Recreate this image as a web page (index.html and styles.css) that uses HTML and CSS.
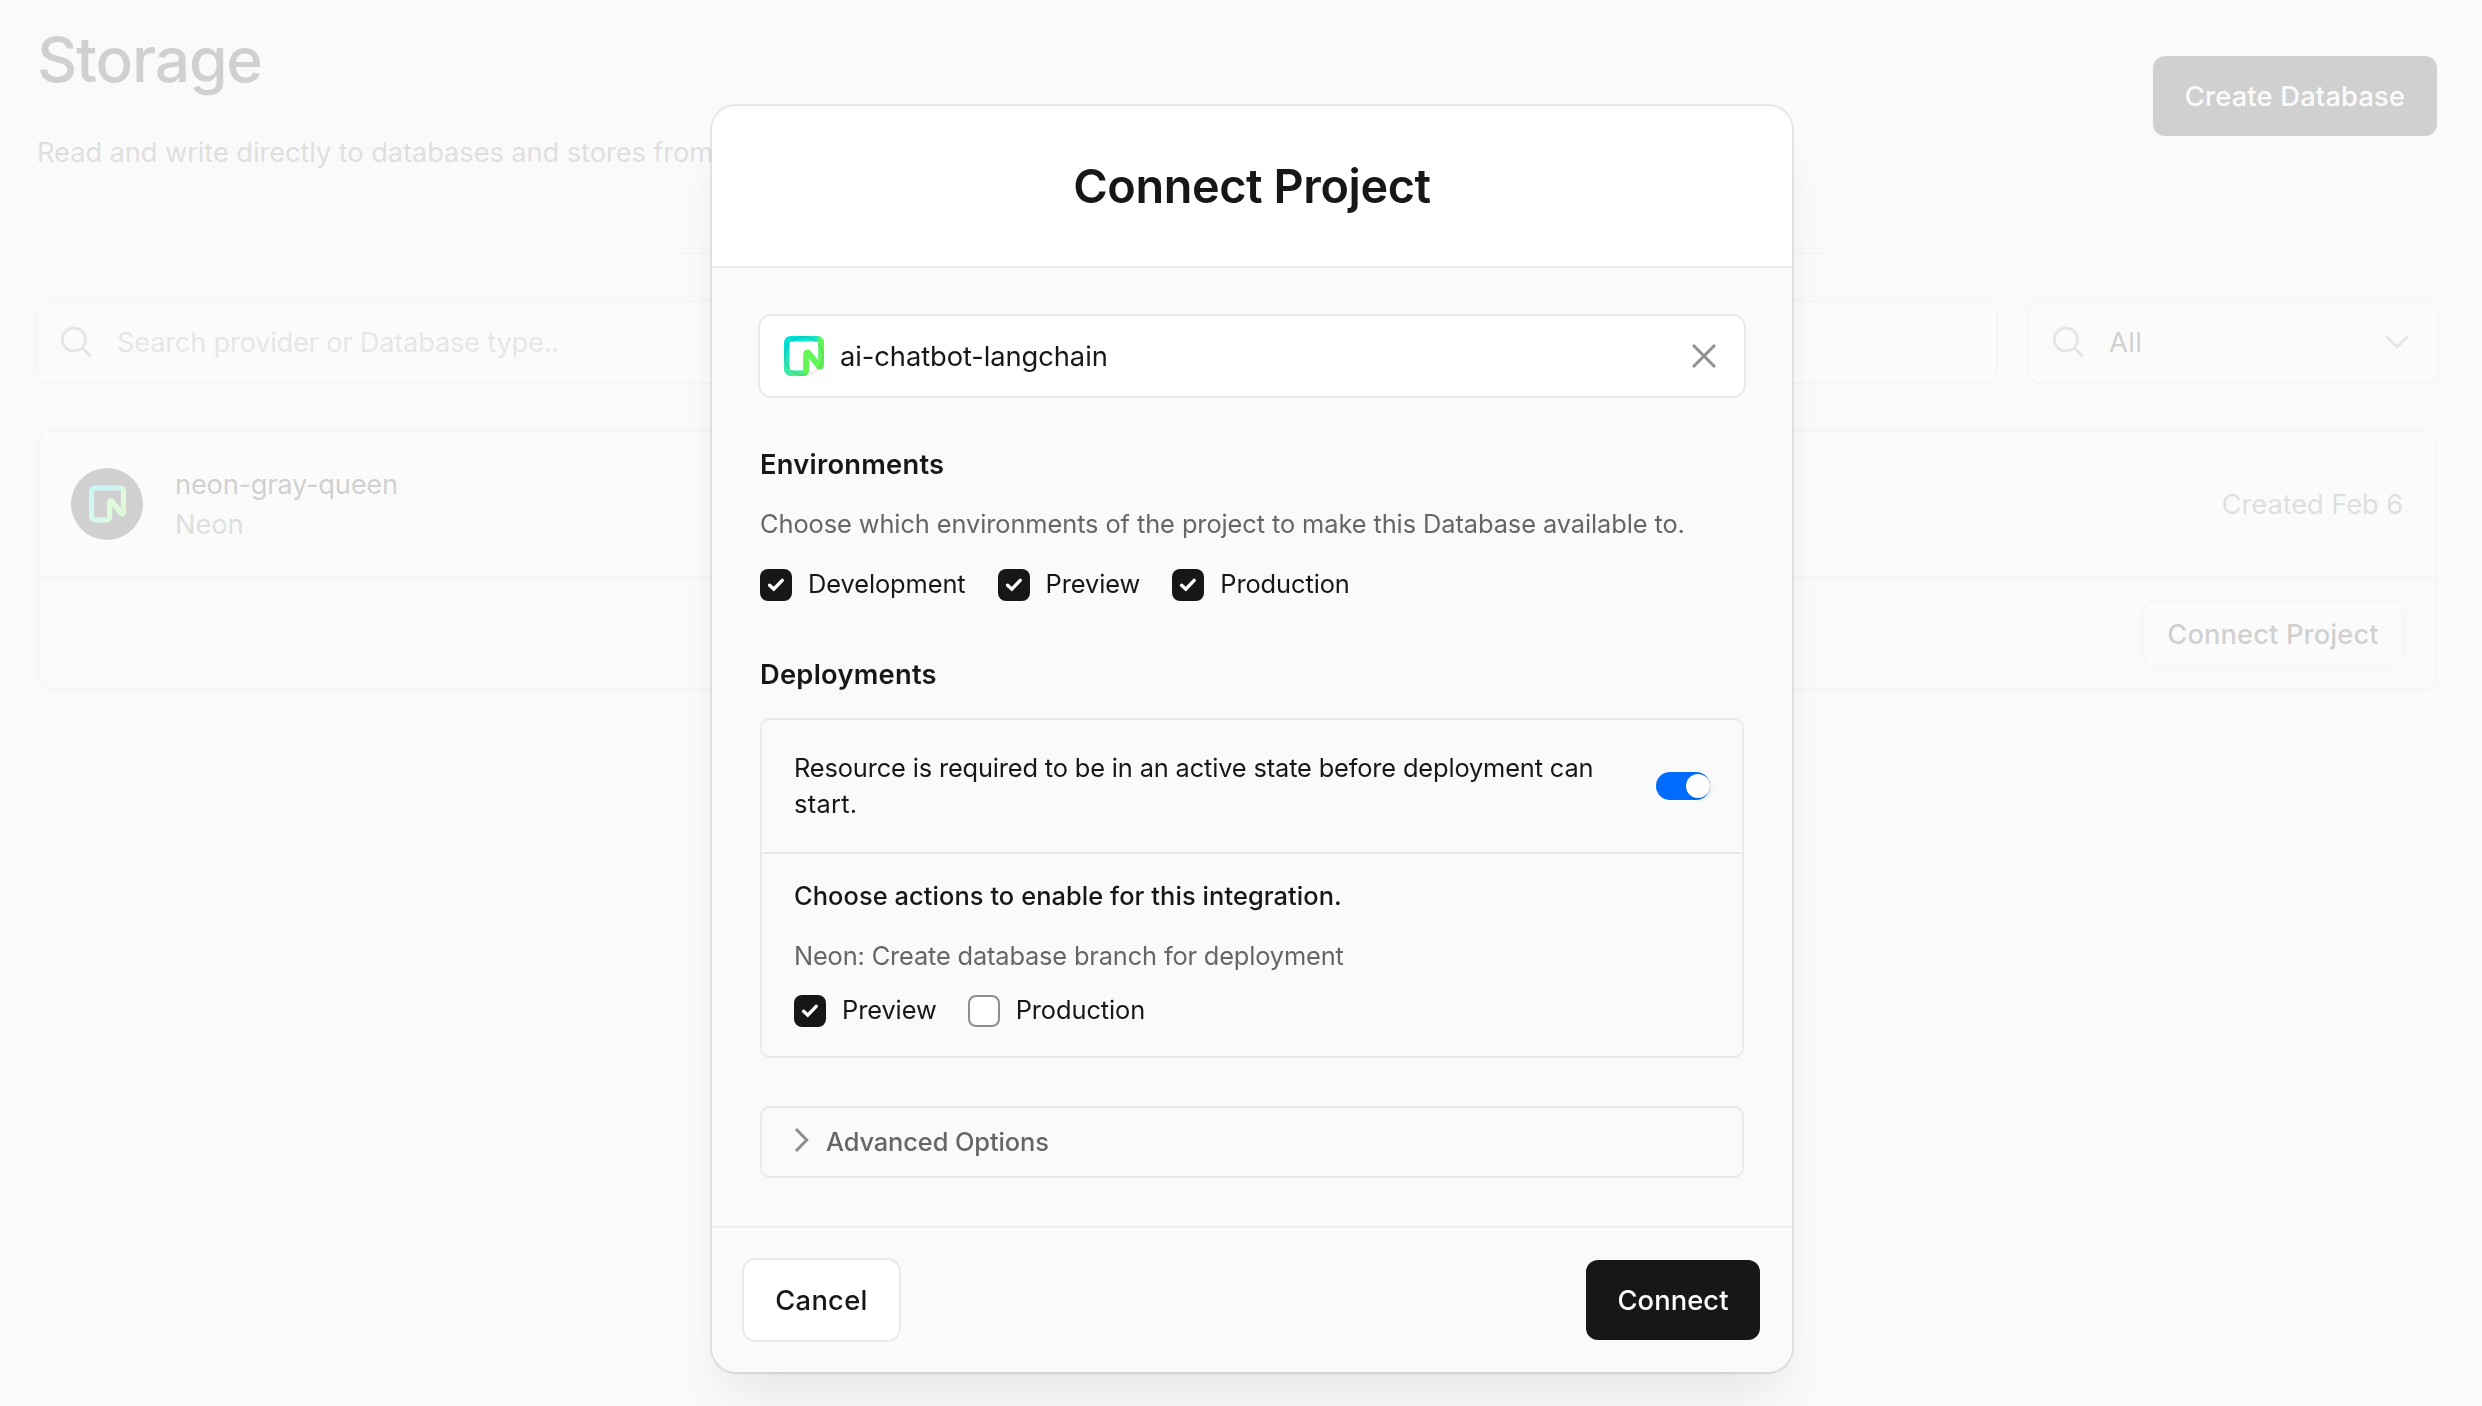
FILE: index.html
```html
<!DOCTYPE html>
<html lang="en">
<head>
<meta charset="utf-8">
<title>Storage</title>
<link rel="stylesheet" href="styles.css">
</head>
<body>
<svg class="defs" aria-hidden="true">
  <defs>
    <linearGradient id="neon-fade" x1="64" y1="64" x2="24" y2="0" gradientUnits="userSpaceOnUse">
      <stop offset="0" stop-color="#62f755"/>
      <stop offset="1" stop-color="#8ff986" stop-opacity="0"/>
    </linearGradient>
    <symbol id="neon" viewBox="0 0 64 64">
      <path fill="#00e0d9" fill-rule="evenodd" d="M0 11.015C0 4.932 4.942 0 11.038 0h41.925C59.059 0 64 4.932 64 11.015v35.599c0 6.293-7.98 9.024-11.85 4.055L40.054 35.138v18.948C40.054 59.56 35.607 64 30.121 64H11.038C4.942 64 0 59.069 0 52.985V11.015Zm11.038-2.203a2.205 2.205 0 0 0-2.208 2.203v41.97c0 1.217.989 2.204 2.208 2.204h19.419c.61 0 .78-.493.78-1.101V28.761c0-6.293 7.98-9.025 11.85-4.055l12.097 15.53V11.015c0-1.218.115-2.203-1.104-2.203H11.038Z"/>
      <path fill="url(#neon-fade)" fill-rule="evenodd" d="M0 11.015C0 4.932 4.942 0 11.038 0h41.925C59.059 0 64 4.932 64 11.015v35.599c0 6.293-7.98 9.024-11.85 4.055L40.054 35.138v18.948C40.054 59.56 35.607 64 30.121 64H11.038C4.942 64 0 59.069 0 52.985V11.015Zm11.038-2.203a2.205 2.205 0 0 0-2.208 2.203v41.97c0 1.217.989 2.204 2.208 2.204h19.419c.61 0 .78-.493.78-1.101V28.761c0-6.293 7.98-9.025 11.85-4.055l12.097 15.53V11.015c0-1.218.115-2.203-1.104-2.203H11.038Z"/>
      <path fill="#63f655" d="M52.963 0C59.059 0 64 4.932 64 11.015v35.599c0 6.293-7.98 9.024-11.85 4.055L40.054 35.138v18.948C40.054 59.56 35.607 64 30.121 64a1.1 1.1 0 0 0 1.104-1.101V28.761c0-6.293 7.98-9.025 11.85-4.055l12.097 15.53V2.203C55.172.986 54.183 0 52.963 0Z"/>
    </symbol>
    <symbol id="search" viewBox="0 0 32 32">
      <circle cx="14" cy="13.5" r="11.6" fill="none" stroke="currentColor" stroke-width="3"/>
      <path d="M22.3 22 31 30.7" fill="none" stroke="currentColor" stroke-width="3"/>
    </symbol>
    <symbol id="check" viewBox="0 0 32 32">
      <path d="M9.6 16.2 13.8 20.2 22.2 11.3" fill="none" stroke="currentColor" stroke-width="3.4" stroke-linecap="round"/>
    </symbol>
  </defs>
</svg>

<main class="page">
  <header class="page-header">
    <div>
      <h1 class="page-title">Storage</h1>
      <p class="page-lead">Read and write directly to databases and stores from</p>
    </div>
    <button class="btn btn-primary create">Create Database</button>
  </header>
  <div class="toolbar">
    <div class="field search-field">
      <svg class="icon-search"><use href="#search"/></svg>
      <span class="placeholder">Search provider or Database type..</span>
    </div>
    <div class="field select-field">
      <svg class="icon-search"><use href="#search"/></svg>
      <span class="select-value">All</span>
      <svg class="icon-down" viewBox="0 0 26 16"><path d="M2 2 13 13 24 2" fill="none" stroke="currentColor" stroke-width="3"/></svg>
    </div>
  </div>
  <section class="store">
    <div class="store-info">
      <span class="avatar"><svg><use href="#neon"/></svg></span>
      <div class="store-text">
        <div class="store-name">neon-gray-queen</div>
        <div class="store-provider">Neon</div>
      </div>
      <div class="store-date">Created Feb 6</div>
    </div>
    <div class="store-actions"><button class="btn connect-project">Connect Project</button></div>
  </section>
</main>

<div class="backdrop">
  <div class="modal" role="dialog" aria-modal="true">
    <header class="modal-header"><h2>Connect Project</h2></header>
    <div class="modal-body">
      <div class="project-field">
        <span class="project-logo"><svg><use href="#neon"/></svg></span>
        <span class="project-name">ai-chatbot-langchain</span>
        <svg class="icon-close" viewBox="0 0 24 24"><path d="M1 1 23 23M23 1 1 23" fill="none" stroke="currentColor" stroke-width="3"/></svg>
      </div>

      <h3 class="environments-title">Environments</h3>
      <p class="environments-hint">Choose which environments of the project to make this Database available to.</p>
      <div class="checks environments-checks">
        <label class="check"><span class="box checked"><svg><use href="#check"/></svg></span><span>Development</span></label>
        <label class="check"><span class="box checked"><svg><use href="#check"/></svg></span><span>Preview</span></label>
        <label class="check"><span class="box checked"><svg><use href="#check"/></svg></span><span>Production</span></label>
      </div>

      <h3 class="deployments-title">Deployments</h3>
      <div class="panel">
        <div class="panel-row">
          <p class="panel-text">Resource is required to be in an active state before deployment can <span class="last-word">start.</span></p>
          <span class="toggle"><span class="knob"></span></span>
        </div>
        <div class="panel-actions">
          <p class="actions-title">Choose actions to enable for this integration.</p>
          <p class="actions-hint">Neon: Create database branch for deployment</p>
          <div class="checks actions-checks">
            <label class="check"><span class="box checked"><svg><use href="#check"/></svg></span><span>Preview</span></label>
            <label class="check"><span class="box"></span><span>Production</span></label>
          </div>
        </div>
      </div>

      <div class="advanced">
        <svg class="icon-right" viewBox="0 0 15 26"><path d="M2 2 12.7 13 2 24" fill="none" stroke="currentColor" stroke-width="3"/></svg>
        <span>Advanced Options</span>
      </div>
    </div>
    <footer class="modal-footer">
      <button class="btn cancel">Cancel</button>
      <button class="btn btn-primary connect">Connect</button>
    </footer>
  </div>
</div>
</body>
</html>
```
FILE: styles.css
```css
* { box-sizing: border-box; }

body {
  margin: 0;
  height: 1406px;
  overflow: hidden;
  background: #fafafa;
  color: #171717;
  font-family: Inter, "Liberation Sans", sans-serif;
  font-size: 27.3px;
  line-height: 40px;
}

h1, h2, h3, p { margin: 0; }
svg { display: block; flex: none; }
.defs { position: absolute; width: 0; height: 0; }

/* Buttons */
.btn {
  border: 0;
  padding: 2px 0 0;
  border-radius: 12px;
  background: #fff;
  box-shadow: 0 0 0 2px #eaeaea;
  color: #171717;
  font: 500 27.3px/40px Inter, "Liberation Sans", sans-serif;
}
.btn-primary { background: #171717; color: #fff; box-shadow: none; }

/* Page behind the dialog */
.page-header {
  display: flex;
  justify-content: space-between;
  align-items: flex-start;
  height: 254px;
  padding: 24px 45px 0 38px;
  border-bottom: 2px solid #e2e2e2;
}
.page-title {
  margin-left: -1px;
  font-size: 62.4px;
  line-height: 72px;
  font-weight: 500;
  letter-spacing: -1.2px;
}
.page-lead { margin: 37px 0 0 -1px; color: #666; letter-spacing: -0.1px; }
.create { width: 284px; height: 80px; margin-top: 32px; letter-spacing: 0.18px; }

.toolbar { display: flex; gap: 33px; padding: 48px 45px 0 38px; }
.field {
  display: flex;
  align-items: center;
  height: 80px;
  padding: 0 28px 0 22px;
  border-radius: 12px;
  background: #fff;
  box-shadow: 0 0 0 2px #e2e2e2;
}
.search-field { flex: 1; }
.select-field { width: 408px; padding: 0 27px 0 23px; }
.icon-search { width: 32px; height: 32px; margin-right: 25px; color: #8f8f8f; }
.placeholder { padding-top: 1px; color: #8f8f8f; letter-spacing: -0.25px; }
.select-value { flex: 1; padding-top: 1px; letter-spacing: 0.4px; }
.icon-down { width: 26px; height: 16px; color: #8f8f8f; }

.store {
  margin: 48px 45px 0 38px;
  border: 2px solid #e2e2e2;
  border-radius: 12px;
  overflow: hidden;
}
.store-info {
  display: flex;
  align-items: center;
  height: 144px;
  padding: 0 32px 0 31px;
  background: #fff;
}
.avatar {
  display: flex;
  align-items: center;
  justify-content: center;
  width: 72px;
  height: 72px;
  margin-right: 32px;
  border-radius: 50%;
  background: #171717;
}
.avatar svg { width: 37px; height: 38px; }
.store-text { flex: 1; padding-top: 2px; }
.store-name { letter-spacing: -0.25px; }
.store-provider { color: #666; letter-spacing: -0.1px; }
.store-date { padding-top: 2px; color: #666; letter-spacing: -0.1px; }
.store-actions {
  display: flex;
  justify-content: flex-end;
  height: 112px;
  padding: 24px 33px;
  border-top: 2px solid #e2e2e2;
}
.connect-project { width: 258px; height: 64px; box-shadow: 0 0 0 2px #e2e2e2; letter-spacing: 0.12px; }

/* Dialog */
.backdrop {
  position: fixed;
  inset: 0;
  display: flex;
  justify-content: center;
  align-items: flex-start;
  padding: 106px 0 0 22px;
  background: rgba(250, 250, 250, 0.815);
}
.modal {
  width: 1080px;
  border-radius: 24px;
  background: #fafafa;
  box-shadow:
    0 0 0 2px rgba(0, 0, 0, 0.08),
    0 2px 2px rgba(0, 0, 0, 0.02),
    0 16px 32px -8px rgba(0, 0, 0, 0.04),
    0 48px 64px -16px rgba(0, 0, 0, 0.06);
}
.modal-header {
  height: 162px;
  padding-top: 45px;
  border-bottom: 2px solid #eaeaea;
  border-radius: 24px 24px 0 0;
  background: #fff;
  text-align: center;
}
.modal-header h2 {
  font-size: 46.8px;
  line-height: 70px;
  font-weight: 600;
  letter-spacing: -0.4px;
}
.modal-body { padding: 48px; font-size: 25.4px; }

.project-field {
  display: flex;
  align-items: center;
  height: 80px;
  padding: 0 28px 0 24px;
  border-radius: 12px;
  background: #fff;
  box-shadow: 0 0 0 2px #eaeaea;
  font-size: 27.3px;
}
.project-logo { position: relative; width: 40px; height: 40px; margin-right: 16px; }
.project-logo svg { width: 40px; height: 40px; }
.project-logo::after {
  content: "";
  position: absolute;
  inset: 0;
  border: 2px solid rgba(0, 0, 0, 0.08);
  border-radius: 50%;
}
.project-name { flex: 1; padding-top: 2px; letter-spacing: -0.07px; }
.icon-close { width: 24px; height: 24px; color: #8f8f8f; }

h3 { font-size: 27.3px; font-weight: 600; letter-spacing: 0.25px; }
.environments-title { margin-top: 49px; }
.environments-hint { margin-top: 18px; line-height: 41px; color: #666; letter-spacing: -0.09px; }
.environments-checks { margin-top: 25px; }
.deployments-title { margin-top: 54px; }

.checks { display: flex; gap: 32px; line-height: 29px; letter-spacing: -0.08px; }
.actions-checks { gap: 31px; }
.check { display: flex; gap: 16px; height: 32px; }
.box {
  width: 32px;
  height: 32px;
  border: 2px solid #8f8f8f;
  border-radius: 8px;
  background: #fff;
}
.box.checked { border: 0; background: #171717; color: #fff; }
.box svg { width: 32px; height: 32px; }

.panel { margin-top: 23px; border: 2px solid #eaeaea; border-radius: 10px; }
.panel-row {
  display: flex;
  align-items: center;
  justify-content: space-between;
  height: 134px;
  padding: 0 32px;
  border-bottom: 2px solid #eaeaea;
}
.panel-text { width: 806px; line-height: 36px; letter-spacing: -0.15px; }
.last-word { letter-spacing: 0.3px; }
.toggle {
  display: flex;
  align-items: center;
  justify-content: flex-end;
  width: 54px;
  height: 28px;
  border-radius: 14px;
  background: #006bff;
}
.knob {
  width: 24px;
  height: 24px;
  border-radius: 50%;
  background: #fff;
  box-shadow: 2px 2px 4px rgba(0, 0, 0, 0.06);
}
.panel-actions { padding: 22px 32px 29px; }
.actions-title { line-height: 39px; font-weight: 500; letter-spacing: 0.086px; }
.actions-hint { margin: 21px 0 19px; color: #666; letter-spacing: -0.16px; }

.advanced {
  display: flex;
  align-items: center;
  height: 72px;
  margin-top: 48px;
  padding-left: 32px;
  border: 2px solid #eaeaea;
  border-radius: 10px;
  color: #666;
  font-weight: 500;
  letter-spacing: -0.1px;
}
.icon-right { width: 15px; height: 26px; margin: 0 17px 4px 0; color: #8f8f8f; }

.modal-footer {
  display: flex;
  justify-content: space-between;
  padding: 32px;
  border-top: 2px solid #eee;
}
.modal-footer .btn { height: 80px; }
.cancel { width: 155px; letter-spacing: 0.3px; }
.connect { width: 174px; letter-spacing: 0.1px; }
```
